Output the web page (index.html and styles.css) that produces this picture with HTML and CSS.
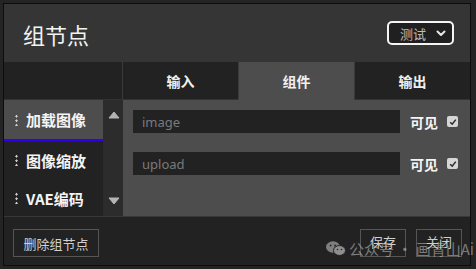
FILE: index.html
```html
<!DOCTYPE html>
<html lang="zh">
<head>
<meta charset="utf-8">
<title>组节点</title>
<link rel="stylesheet" href="styles.css">
</head>
<body>
<div class="dialog">
  <header class="header">
    <h1 class="title">组节点</h1>
    <div class="select">
      <span class="select-text">测试</span>
      <svg class="chevron" width="10" height="7" viewBox="0 0 10 7"><path d="M1.5 1.5 L5 5 L8.5 1.5" fill="none" stroke="#e6e6e6" stroke-width="2" stroke-linecap="round" stroke-linejoin="round"/></svg>
    </div>
  </header>
  <div class="main">
    <div class="corner"></div>
    <div class="tabs">
      <div class="tab">输入</div>
      <div class="tab active">组件</div>
      <div class="tab">输出</div>
    </div>
    <div class="sidebar">
      <ul class="nodes">
        <li class="node selected"><span class="handle"></span>加载图像</li>
        <li class="node"><span class="handle"></span>图像缩放</li>
        <li class="node"><span class="handle"></span>VAE编码</li>
      </ul>
      <div class="scroll">
        <svg width="12" height="8" viewBox="0 0 12 8"><path d="M6 1 L11 7 L1 7 Z" fill="#b4b4b4" stroke="#b4b4b4" stroke-width="1" stroke-linejoin="round"/></svg>
        <svg width="12" height="8" viewBox="0 0 12 8"><path d="M1 1 L11 1 L6 7 Z" fill="#b4b4b4" stroke="#b4b4b4" stroke-width="1" stroke-linejoin="round"/></svg>
      </div>
    </div>
    <div class="content">
      <div class="row">
        <input class="field" type="text" placeholder="image">
        <span class="label">可见</span>
        <span class="check"><svg width="8" height="8" viewBox="0 0 8 8"><path d="M1.2 4.2 L3.2 6.2 L6.8 1.6" fill="none" stroke="#2a2a2a" stroke-width="1.5"/></svg></span>
      </div>
      <div class="row">
        <input class="field" type="text" placeholder="upload">
        <span class="label">可见</span>
        <span class="check"><svg width="8" height="8" viewBox="0 0 8 8"><path d="M1.2 4.2 L3.2 6.2 L6.8 1.6" fill="none" stroke="#2a2a2a" stroke-width="1.5"/></svg></span>
      </div>
    </div>
  </div>
  <footer class="footer">
    <button class="btn">删除组节点</button>
    <div class="actions">
      <button class="btn small">保存</button>
      <button class="btn small">关闭</button>
    </div>
    <div class="watermark">
      <svg width="20" height="15" viewBox="0 0 20 15">
        <ellipse cx="7" cy="6" rx="7" ry="5.8" fill="#8a8a8a"/>
        <ellipse cx="13.5" cy="9.5" rx="6" ry="5" fill="#9a9a9a" stroke="#222" stroke-width="1"/>
        <circle cx="4.6" cy="4.5" r="0.9" fill="#222"/>
        <circle cx="9" cy="4.5" r="0.9" fill="#222"/>
        <circle cx="11.5" cy="8.5" r="0.8" fill="#222"/>
        <circle cx="15.5" cy="8.5" r="0.8" fill="#222"/>
      </svg>
      <span>公众号 · 画青山Ai</span>
    </div>
  </footer>
</div>
</body>
</html>
```

FILE: styles.css
```css
* { box-sizing: border-box; }

html, body {
  margin: 0;
  padding: 0;
  background: #242424;
}

body {
  font-family: "Noto Sans", "Noto Sans CJK SC", sans-serif;
  color: #fff;
  width: 476px;
  height: 269px;
  overflow: hidden;
}

.dialog {
  margin: 3px 0 0 3px;
  width: 468px;
  height: 263px;
  border: 1px solid #0c0c0c;
  background: #222;
  display: flex;
  flex-direction: column;
}

.header {
  height: 58px;
  flex: none;
  background: #353535;
  display: flex;
  align-items: center;
  justify-content: space-between;
  padding: 0 16px 0 19px;
}

.title {
  margin: 0;
  font-family: "Noto Sans CJK SC", sans-serif;
  font-size: 22px;
  font-weight: 400;
  line-height: 1;
  color: #f2f2f2;
  position: relative;
  top: 1px;
}

.select {
  width: 67px;
  height: 24px;
  border: 2px solid #f4f4f4;
  border-radius: 5px;
  background: #202020;
  display: flex;
  align-items: center;
  justify-content: space-between;
  padding: 0 6px 0 11px;
}

.select-text {
  font-family: "Noto Sans CJK SC", sans-serif;
  font-size: 13px;
  color: #bdbdbd;
  line-height: 1;
}

.chevron { display: block; }

.main {
  height: 154px;
  flex: none;
  display: grid;
  grid-template-columns: 119px 1fr;
  grid-template-rows: 38px 1fr;
}

.corner {
  background: #222;
  border-right: 1px solid #3a3a3a;
  border-bottom: 1px solid #333;
}

.tabs {
  display: flex;
}

.tab {
  flex: 1;
  display: flex;
  align-items: center;
  justify-content: center;
  background: #222;
  border-bottom: 1px solid #333;
  font-family: "Noto Sans CJK SC", sans-serif;
  font-size: 14px;
  font-weight: 700;
  color: #f0f0f0;
}

.tab + .tab { border-left: 1px solid #3a3a3a; }

.tab.active {
  background: #4d4d4d;
  border-bottom-color: #4d4d4d;
}

.sidebar {
  display: flex;
  overflow: hidden;
}

.nodes {
  list-style: none;
  margin: 0;
  padding: 0;
  width: 99px;
  background: #222;
}

.node {
  height: 38px;
  display: flex;
  align-items: center;
  padding-left: 11px;
  font-family: "Noto Sans CJK SC", sans-serif;
  font-size: 15px;
  font-weight: 700;
  color: #f4f4f4;
  white-space: nowrap;
}

.node.selected {
  height: 41px;
  background: #4d4d4d;
  border-bottom: 2px solid #3300ee;
}

.handle {
  width: 3px;
  height: 12px;
  margin-right: 8px;
  background: radial-gradient(circle, #cfcfcf 0 1px, transparent 1.3px) center top / 3px 4.5px repeat-y;
}

.scroll {
  width: 20px;
  background: #2c2c2c;
  display: flex;
  flex-direction: column;
  justify-content: space-between;
  align-items: center;
  padding: 11px 0 11px 1px;
}

.scroll svg { display: block; }

.content {
  background: #4d4d4d;
  padding: 10px 11px 0 10px;
  display: flex;
  flex-direction: column;
  gap: 19px;
}

.row {
  display: flex;
  align-items: center;
}

.field {
  width: 267px;
  height: 23px;
  border: none;
  outline: none;
  background: #222;
  color: #ddd;
  padding: 0 9px;
  font-family: "Noto Sans", sans-serif;
  font-size: 13px;
}

.field::placeholder { color: #7a7a7a; }

.label {
  margin-left: 10px;
  font-family: "Noto Sans CJK SC", sans-serif;
  font-size: 14px;
  font-weight: 700;
  color: #f4f4f4;
}

.check {
  margin-left: 9px;
  width: 11px;
  height: 11px;
  border-radius: 2px;
  background: #d6d6d6;
  display: flex;
  align-items: center;
  justify-content: center;
}

.check svg { display: block; }

.footer {
  flex: 1;
  border-top: 1px solid #383838;
  background: #222;
  display: flex;
  justify-content: space-between;
  align-items: flex-start;
  padding: 12px 8px 0 9px;
  position: relative;
}

.actions {
  display: flex;
  gap: 10px;
}

.btn {
  height: 28px;
  width: 86px;
  padding: 0;
  background: #222;
  border: 1px solid #555;
  color: #d0d0d0;
  font-family: "Noto Sans CJK SC", sans-serif;
  font-size: 13px;
  line-height: 1;
}

.btn.small { width: 46px; padding-bottom: 3px; }

.watermark {
  position: absolute;
  left: 322px;
  top: 24px;
  display: flex;
  align-items: center;
  gap: 3px;
  color: rgba(210, 210, 210, 0.5);
  font-family: "Noto Sans CJK SC", sans-serif;
  font-size: 15px;
  line-height: 1;
  white-space: nowrap;
  pointer-events: none;
}

.watermark svg { display: block; opacity: 0.9; }
```
